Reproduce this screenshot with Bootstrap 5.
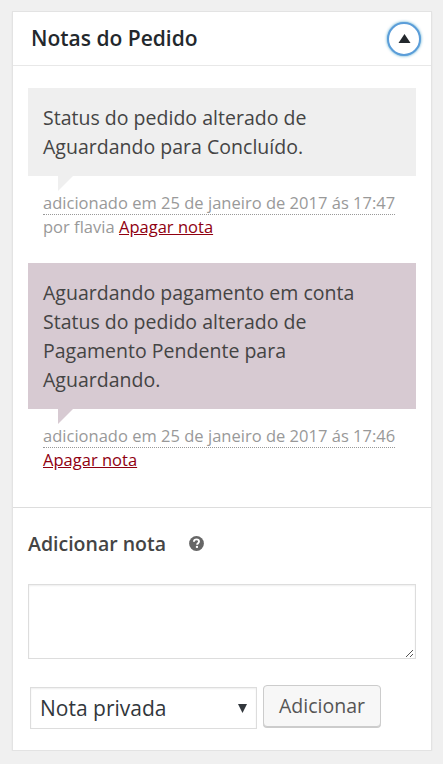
<!DOCTYPE html>
<html lang="pt-BR">
<head>
<meta charset="utf-8">
<meta name="viewport" content="width=device-width, initial-scale=1">
<title>Notas do Pedido</title>
<link href="https://cdn.jsdelivr.net/npm/bootstrap@5.3.0/dist/css/bootstrap.min.css" rel="stylesheet">
<style>
body{background:#f0f0f0;font-family:"Open Sans",sans-serif;font-size:19.5px;line-height:29px;color:#444;overflow:hidden}
.panel{margin:11px 11px 0 12px;height:740px;border:1px solid #e3e3e3;border-radius:0;box-shadow:0 1px 2px rgba(0,0,0,.05)}
.panel-head{height:54px;padding:0 10px 0 18px;background:#fff;border-bottom:1px solid #e8e8e8}
.panel-title{font-size:21px;font-weight:570;line-height:29px;color:#23282d}
.toggle{width:34px;height:34px;border:2px solid #5b9dd9;box-shadow:0 0 3px rgba(30,140,190,.8);background:#fff}
.notes{height:442px;padding:22px 15px 0;border-bottom:1px solid #ddd}
.note-text{position:relative;padding:15px;background:#efefef;letter-spacing:.015px}
.note-text::after{content:"";position:absolute;left:30px;top:100%;border-style:solid;border-width:15px 15px 0 0;border-color:#efefef transparent transparent}
.note-private{background:#d7cad2}
.note-private::after{border-top-color:#d7cad2}
.note-meta{font-size:16.5px;line-height:24px;color:#999;padding:15px 15px 0;letter-spacing:.015px}
.note-meta .date{border-bottom:1px dotted #999}
.note-meta a{color:#900010}
.first-note{height:175px}
.form-label-note{font-size:19.5px;font-weight:570;line-height:29px}
.note-form{padding:21px 15px 0}
.help-icon{margin-left:23px}
.field{border:1px solid #ddd;border-radius:0;box-shadow:inset 0 1px 2px rgba(0,0,0,.07)}
.note-input{height:75px;margin-top:26px;resize:none}
.resize-grip{position:absolute;right:1px;bottom:1px}
.controls{margin:26px 0 0 2px;gap:6px}
.kind{width:227px;height:42px;margin-top:2px;padding:0 9px;font-size:21px;color:#32373c}
.btn-add{width:118px;height:42px;padding:0;font-size:19.5px;line-height:38px;color:#555;background:#f7f7f7;border:1px solid #ccc;border-radius:4px;box-shadow:0 1px 0 #ccc}
</style>
</head>
<body>
<main class="card panel">
  <div class="panel-head d-flex align-items-center justify-content-between">
    <h2 class="panel-title m-0">Notas do Pedido</h2>
    <button class="toggle rounded-circle p-0 d-flex align-items-center justify-content-center" aria-label="Alternar painel"><svg width="14" height="10" viewBox="0 0 14 10"><path d="M7.500 0 13.500 9H1.500z" fill="#23282d"/></svg></button>
  </div>
  <section class="notes">
    <article class="first-note">
      <div class="note-text">Status do pedido alterado de<br>Aguardando para Concluído.</div>
      <div class="note-meta text-nowrap"><span class="date">adicionado em 25 de janeiro de 2017 ás 17:47</span><br>por flavia <a href="#">Apagar nota</a></div>
    </article>
    <article>
      <div class="note-text note-private">Aguardando pagamento em conta<br>Status do pedido alterado de<br>Pagamento Pendente para<br>Aguardando.</div>
      <div class="note-meta text-nowrap"><span class="date">adicionado em 25 de janeiro de 2017 ás 17:46</span><br><a href="#">Apagar nota</a></div>
    </article>
  </section>
  <form class="note-form">
    <div class="d-flex align-items-center">
      <label class="form-label-note" for="note">Adicionar nota</label>
      <svg class="help-icon" width="15" height="15" viewBox="0 0 15 15"><circle cx="7.500" cy="7.500" r="7.400" fill="#666"/><path d="M4.900 5.700C5 4.200 6 3.400 7.500 3.400c1.500 0 2.500.8 2.500 2.100 0 1.700-1.900 1.600-1.900 3.200" fill="none" stroke="#fff" stroke-width="1.900"/><rect x="6.900" y="9.900" width="2.100" height="2" fill="#fff"/></svg>
    </div>
    <div class="position-relative">
      <textarea id="note" class="form-control field note-input"></textarea>
      <svg class="resize-grip" width="10" height="10" viewBox="0 0 10 10"><path d="M1 9 8 2M5 9l3-3" stroke="#555" fill="none"/></svg>
    </div>
    <div class="d-flex controls">
      <div class="field kind d-flex align-items-center justify-content-between" role="combobox" tabindex="0"><span>Nota privada</span><svg width="9" height="9" viewBox="0 0 9 9"><path d="M0 0h9L4.500 9z" fill="#32373c"/></svg></div>
      <button type="button" class="btn btn-add">Adicionar</button>
    </div>
  </form>
</main>
<script src="https://cdn.jsdelivr.net/npm/bootstrap@5.3.0/dist/js/bootstrap.bundle.min.js"></script>
</body>
</html>
